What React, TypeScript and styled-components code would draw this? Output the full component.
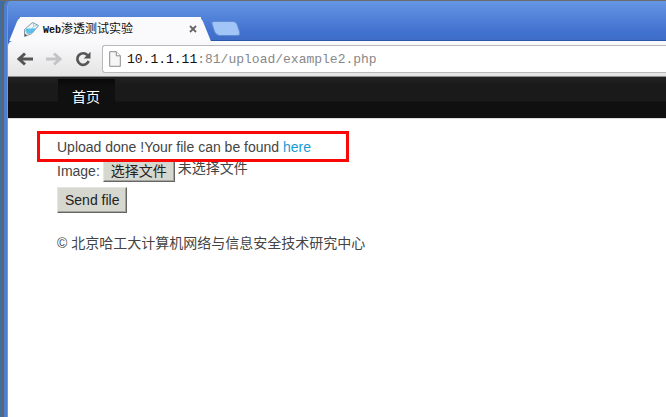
import React, { useRef, useState } from "react";
import styled, { createGlobalStyle } from "styled-components";

const GlobalStyle = createGlobalStyle`
  * { box-sizing: border-box; }
  body {
    margin: 0;
    background: #3a6ea5;
    font-family: "Liberation Sans", "Noto Sans CJK SC", sans-serif;
    font-size: 14px;
    line-height: 24px;
    color: #444;
  }
`;

const Desktop = styled.div`
  min-height: 100vh;
  display: flex;
  padding-left: 2px;
  border-top: 1px solid #6b6b6b;
  overflow: hidden;
`;

const BrowserWindow = styled.div`
  flex: 1;
  min-width: 0;
  display: flex;
  flex-direction: column;
  border-left: 2px solid #60656d;
  border-top-left-radius: 6px;
  padding-left: 4px;
  background: linear-gradient(#6596e3, #4272d0 30px, #3f6dc6 40px);
  box-shadow: inset 3px 0 0 #4d7fd0, inset 4px 0 0 #8298c4;
`;

const TabStrip = styled.div`
  height: 40px;
  display: flex;
  align-items: flex-end;
  gap: 12px;
  padding-left: 12px;
  border-bottom: 1px solid #2b57ab;
`;

const Tab = styled.div`
  position: relative;
  z-index: 1;
  width: 181px;
  height: 24px;
  margin-bottom: -1px;
  display: flex;
  align-items: center;
  padding: 0 4px 0 3px;
  background: #fafafc;
  color: #111;

  &::before,
  &::after {
    content: "";
    position: absolute;
    z-index: -1;
    top: 0;
    width: 20px;
    height: 100%;
    background: #fafafc;
  }
  &::before {
    left: -6px;
    border-top-left-radius: 5px;
    transform: skewX(-22deg);
  }
  &::after {
    right: -5px;
    border-top-right-radius: 5px;
    transform: skewX(22deg);
  }
`;

const TabTitle = styled.span`
  flex: 1;
  margin-left: 3px;
  padding-top: 2px;
  font-size: 12px;
  line-height: 20px;
  white-space: nowrap;
`;

const TitleLatin = styled.span`
  font-family: "Liberation Mono", monospace;
  font-size: 10px;
  font-weight: bold;
`;

const IconButton = styled.button`
  display: flex;
  padding: 0;
  border: 0;
  background: none;
  color: #555;
  &:disabled { color: #c4c4c6; }
`;

const NewTab = styled.button`
  width: 26px;
  height: 15px;
  margin-bottom: 4px;
  padding: 0;
  border: 1px solid #5f8bd0;
  border-radius: 3px 4px 4px 5px;
  background: #a0c5f6;
  transform: skewX(18deg);
`;

const Toolbar = styled.div`
  height: 36px;
  display: flex;
  align-items: center;
  gap: 13px;
  padding-left: 9px;
  background: linear-gradient(#fafafc, #e4e4e5);
  border-bottom: 1px solid #8e8e8e;
  border-top-left-radius: 5px;
`;

const AddressBar = styled.div`
  flex: 1;
  height: 28px;
  display: flex;
  align-items: center;
  gap: 6px;
  margin-left: -2px;
  padding-left: 6px;
  border: 1px solid #b9b9bb;
  border-right: 0;
  border-radius: 3px 0 0 3px;
  background: #fff;
`;

const Url = styled.div`
  padding-top: 3px;
  font-family: "Liberation Mono", monospace;
  font-size: 13px;
  line-height: 20px;
  color: #888;
  white-space: nowrap;
`;

const Host = styled.span`
  color: #111;
`;

const Page = styled.div`
  flex: 1;
  background: #fff;
`;

const NavBar = styled.nav`
  height: 42px;
  display: flex;
  padding-left: 50px;
  background: linear-gradient(#222, #1a1a1a 8px, #1a1a1a 24px, #101010 25px);
  border-bottom: 1px solid #ddd;
`;

const NavLink = styled.a`
  display: flex;
  align-items: center;
  padding: 0 15px 4px 14px;
  margin-top: 2px;
  background: linear-gradient(#090909, #101010 8px);
  color: #fff;
  text-decoration: none;
`;

const Content = styled.main`
  padding: 16px 49px;
`;

const Message = styled.p`
  position: relative;
  width: max-content;
  margin: 0;
`;

const Highlight = styled.span`
  position: absolute;
  inset: -4px -38px -3px -20px;
  border: 3px solid #f90808;
  pointer-events: none;
`;

const Link = styled.a`
  color: #1c9bd2;
  text-decoration: none;
`;

const UploadForm = styled.form`
  display: flex;
  flex-direction: column;
  align-items: flex-start;
  gap: 4px;
`;

const FileRow = styled.div`
  display: flex;
  align-items: center;
  gap: 3px;
`;

const HiddenFile = styled.input`
  position: absolute;
  width: 1px;
  height: 1px;
  opacity: 0;
`;

const PushButton = styled.button<{ $compact?: boolean }>`
  height: ${(p) => (p.$compact ? 22 : 26)}px;
  padding: 0 7px;
  border: 1px solid;
  border-color: #e6e6e0 #666 #666 #e6e6e0;
  box-shadow: inset -1px -1px 0 #a5a5a0;
  background: #d6d7ce;
  color: #222;
  font-family: inherit;
  font-size: 14px;
  line-height: 20px;
`;

const FileName = styled.output`
  margin-top: -6px;
`;

const Footer = styled.footer`
  margin-top: 18px;
`;

const PencilIcon = () => (
  <svg width="17" height="17" viewBox="0 0 17 17" aria-hidden="true">
    <path d="M1.5 8.5 9.5 1.5 15.5 4.5 9 12.5 1.5 15.5Z" fill="#eef7fb" stroke="#8c979e" strokeLinejoin="round" />
    <path d="M2.5 7.8 12.8 7.3 9 12 4 12.5Z" fill="#4fc0ee" />
    <path d="M2 9 4 12.5 9 12.5M9.5 1.5 11 5 15.5 4.5M11 5 4 12.5" fill="none" stroke="#8fc4dc" strokeWidth=".8" />
    <path d="m1.5 15.5.5-3 2.3 2Z" fill="#666" />
  </svg>
);

const CloseIcon = () => (
  <svg width="8" height="8" viewBox="0 0 8 8" aria-hidden="true">
    <path d="m1 1 6 6M7 1 1 7" stroke="#666" strokeWidth="1.8" />
  </svg>
);

const ArrowIcon = ({ forward = false }: { forward?: boolean }) => (
  <svg width="16" height="14" viewBox="0 0 16 14" aria-hidden="true">
    <path
      d={forward ? "M0 7H13.5M8 1.5 14 7 8 12.5" : "M16 7H2.5M8 1.5 2 7 8 12.5"}
      fill="none"
      stroke="currentColor"
      strokeWidth="3"
    />
  </svg>
);

const ReloadIcon = () => (
  <svg width="16" height="16" viewBox="0 0 16 16" aria-hidden="true">
    <path d="M12.5 4.2A5.8 5.8 0 1 0 13.6 10" fill="none" stroke="currentColor" strokeWidth="2.7" />
    <path d="M15.5.8V7.5H8.7Z" fill="currentColor" />
  </svg>
);

const PageIcon = () => (
  <svg width="12" height="16" viewBox="0 0 12 16" aria-hidden="true">
    <path d="M.7.7H7.3L11.3 4.8V15.3H.7Z" fill="#f6f6f6" stroke="#8d8d8d" />
    <path d="M7.3.7V4.8H11.3" fill="#fff" stroke="#8d8d8d" />
  </svg>
);

export default function App() {
  const fileInput = useRef<HTMLInputElement>(null);
  const [fileName, setFileName] = useState("未选择文件");

  return (
    <>
      <GlobalStyle />
      <Desktop>
        <BrowserWindow>
          <TabStrip>
            <Tab>
              <PencilIcon />
              <TabTitle><TitleLatin>Web</TitleLatin>渗透测试实验</TabTitle>
              <IconButton type="button" aria-label="关闭"><CloseIcon /></IconButton>
            </Tab>
            <NewTab type="button" aria-label="新标签页" />
          </TabStrip>
          <Toolbar>
            <IconButton type="button" aria-label="后退"><ArrowIcon /></IconButton>
            <IconButton type="button" aria-label="前进" disabled><ArrowIcon forward /></IconButton>
            <IconButton type="button" aria-label="重新加载"><ReloadIcon /></IconButton>
            <AddressBar>
              <PageIcon />
              <Url><Host>10.1.1.11</Host>:81/upload/example2.php</Url>
            </AddressBar>
          </Toolbar>
          <Page>
            <NavBar>
              <NavLink href="#">首页</NavLink>
            </NavBar>
            <Content>
              <Message>
                Upload done !Your file can be found <Link href="#">here</Link>
                <Highlight />
              </Message>
              <UploadForm onSubmit={(e) => e.preventDefault()}>
                <FileRow>
                  <label htmlFor="image">Image:</label>
                  <HiddenFile
                    ref={fileInput}
                    id="image"
                    type="file"
                    tabIndex={-1}
                    onChange={(e) => setFileName(e.target.files?.[0]?.name ?? "未选择文件")}
                  />
                  <PushButton $compact type="button" onClick={() => fileInput.current?.click()}>
                    选择文件
                  </PushButton>
                  <FileName htmlFor="image">{fileName}</FileName>
                </FileRow>
                <PushButton type="submit">Send file</PushButton>
              </UploadForm>
              <Footer>© 北京哈工大计算机网络与信息安全技术研究中心</Footer>
            </Content>
          </Page>
        </BrowserWindow>
      </Desktop>
    </>
  );
}
